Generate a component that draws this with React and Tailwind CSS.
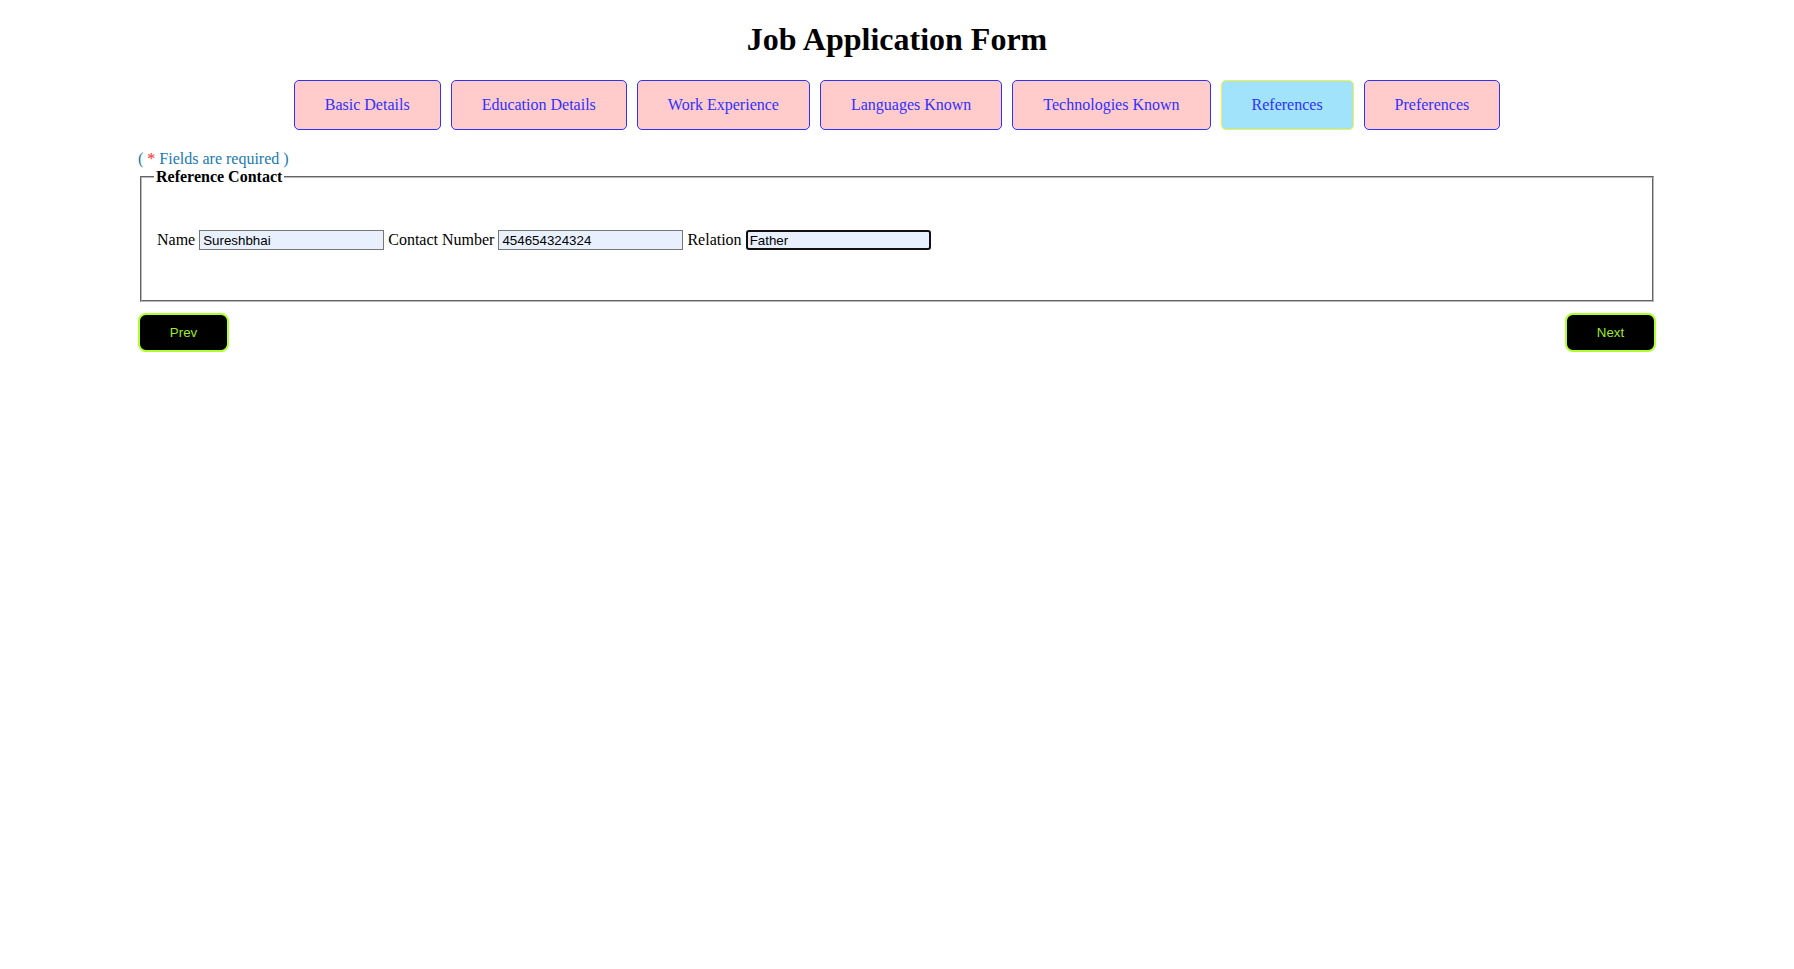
import { useState } from 'react';

const tabs = [
  'Basic Details',
  'Education Details',
  'Work Experience',
  'Languages Known',
  'Technologies Known',
  'References',
  'Preferences',
];

export default function App() {
  const [active] = useState('References');

  return (
    <div className="min-h-screen bg-white font-['Liberation_Serif',serif] text-black">
      <h1 className="pt-[21px] pb-[22px] text-center text-[32px] font-bold leading-[37px]">Job Application Form</h1>

      <div className="flex justify-center gap-[10px]">
        {tabs.map((t) => (
          <button
            key={t}
            className={`h-[50px] rounded-[5px] border px-[30px] text-[16px] text-[#3030ff] ${
              t === active ? 'border-[#f2f23a] bg-[#a0e3fb]' : 'border-[#3030ff] bg-[#ffcccb]'
            }`}
          >
            {t}
          </button>
        ))}
      </div>

      <div className="mx-auto mt-[20px] w-[1518px]">
        <p className="text-[16px] leading-[18px] text-[#2079b0]">
          ( <span className="text-[#ff2a2a]">*</span> Fields are required )
        </p>

        <fieldset className="mx-[2px] border-2 border-[#b8b8b8] px-[12px] [border-style:groove]">
          <legend className="px-[2px] text-[16px] font-bold leading-[18px]">Reference Contact</legend>
          <div className="flex items-center gap-[4px] pt-[42px] pb-[48px] pl-[3px] text-[16px]">
            <label>Name</label>
            <input
              defaultValue="Sureshbhai"
              className="h-[20px] w-[185px] border border-[#767676] bg-[#e8f0fe] px-[3px] font-['Liberation_Sans',sans-serif] text-[13.33px] outline-none"
            />
            <label>Contact Number</label>
            <input
              defaultValue="454654324324"
              className="h-[20px] w-[185px] border border-[#767676] bg-[#e8f0fe] px-[3px] font-['Liberation_Sans',sans-serif] text-[13.33px] outline-none"
            />
            <label>Relation</label>
            <input
              defaultValue="Father"
              className="h-[20px] w-[185px] rounded-[3px] border-2 border-[#101010] bg-[#e8f0fe] px-[2px] font-['Liberation_Sans',sans-serif] text-[13.33px] outline-none"
            />
          </div>
        </fieldset>

        <div className="mt-[11px] flex justify-between">
          <button className="h-[39px] w-[91px] rounded-[8px] border-2 border-[#adff2f] bg-black font-['Liberation_Sans',sans-serif] text-[13.33px] text-[#9fe82a]">
            Prev
          </button>
          <button className="h-[39px] w-[91px] rounded-[8px] border-2 border-[#adff2f] bg-black font-['Liberation_Sans',sans-serif] text-[13.33px] text-[#9fe82a]">
            Next
          </button>
        </div>
      </div>
    </div>
  );
}
